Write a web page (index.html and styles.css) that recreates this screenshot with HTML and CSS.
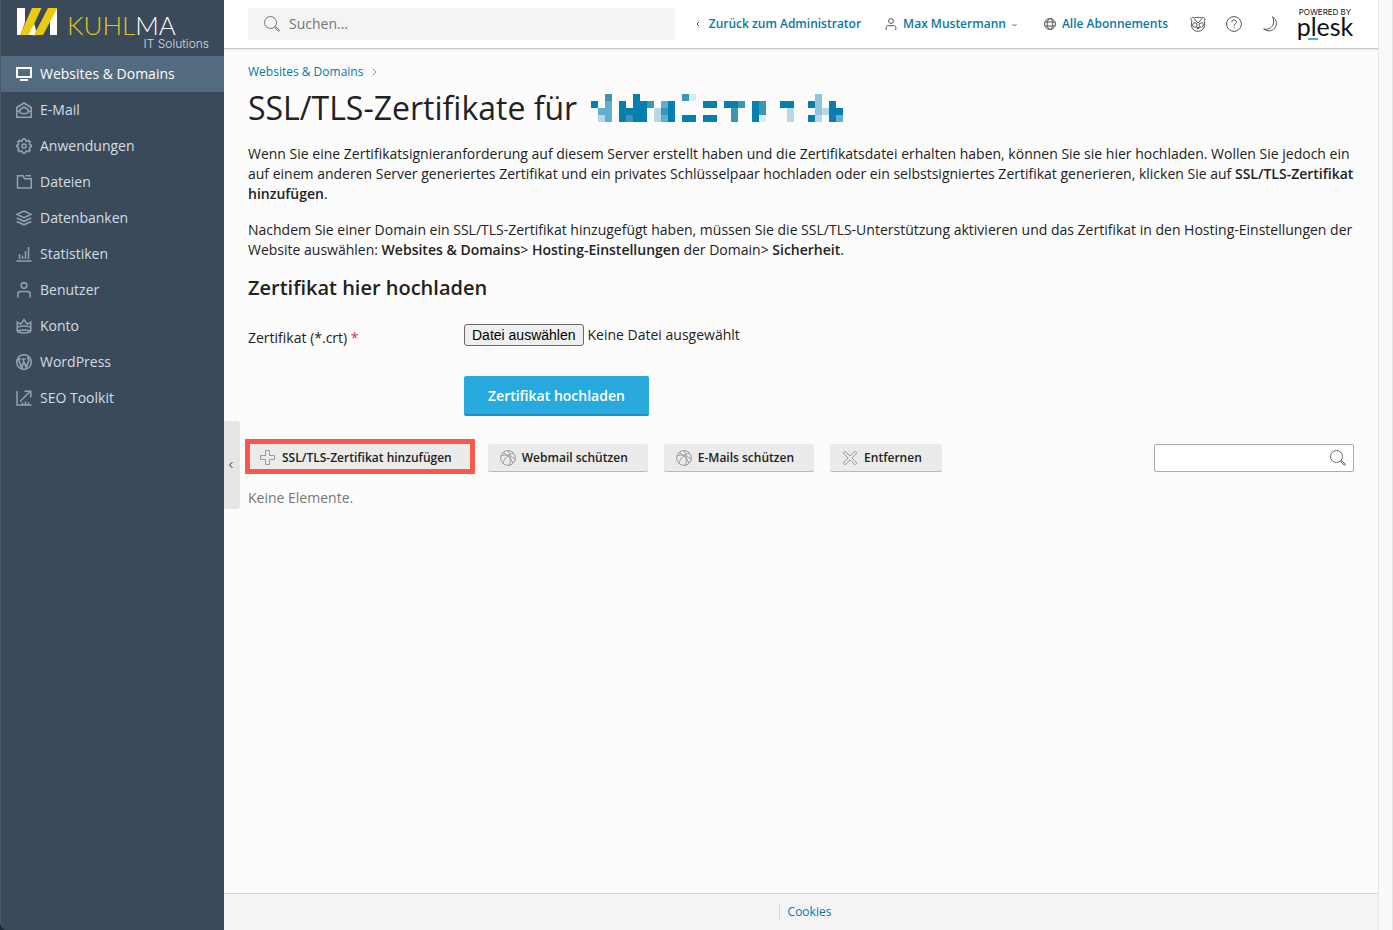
FILE: index.html
```html
<!DOCTYPE html>
<html lang="de">

<head>
	<meta charset="UTF-8" />
	<meta name="viewport" content="width=device-width, initial-scale=1.0" />
	<title>SSL/TLS-Zertifikate</title>
	<link rel="stylesheet" href="styles.css">
</head>

<body>
	<div class="page">
		<aside class="sidebar">
			<a class="brand" href="#">
				<svg class="brand-mark" width="42" height="28" viewBox="0 0 42 28">
					<path fill="#fff" d="M1 0h8v14L4.500 27H1zM13.500 19l4-5 2 6 1 7-3 .5zM41 0v27h-7V12z" />
					<path fill="#e9cb12" d="M16 0h9.500L13 27H4zM32 0h9.500L27 27h-9z" />
					<path fill="#fff" d="M12.800 27l3-7.500 3 3.500-1.800 4z" />
				</svg>
				<span class="brand-text">
					<span class="brand-name"><span class="brand-accent">KUHL</span>MA</span>
					<span class="brand-sub">IT Solutions</span>
				</span>
			</a>
			<nav class="menu">
				<a class="menu-item active" href="#">
					<svg class="icon" viewBox="0 0 16 16"><path stroke-width="2" d="M1 2h14v9H1z" /><path stroke-width="2" d="M4 14h8" /></svg>
					Websites &amp; Domains
				</a>
				<a class="menu-item" href="#">
					<svg class="icon" viewBox="0 0 16 16"><path d="M.8 5.500L8 1l7.200 4.500v9.700H.8zM1 8.500l4.500 3h5l4.500-3M4 10V7.500L8 5l4 2.500V10" /></svg>
					E-Mail
				</a>
				<a class="menu-item" href="#">
					<svg class="icon" viewBox="0 0 16 16"><circle cx="8" cy="8" r="2" /><path d="M6.700 1h2.600l.5 1.900 1 .4 1.800-1 1.600 1.600-1 1.800.4 1 1.800.5v1.700l-1.800.5-.4 1.200 1 1.700-1.600 1.600-1.800-1-1 .4L9.300 15H6.700l-.5-1.700-1-.4-1.800 1-1.600-1.600 1-1.700-.4-1.200L.8 8.900V7.200l1.600-.5.4-1-1-1.800 1.600-1.600 1.800 1 1-.4z" /></svg>
					Anwendungen
				</a>
				<a class="menu-item" href="#">
					<svg class="icon" viewBox="0 0 16 16"><path d="M1.500 1.700h5.500l1.500 3h6.800v9.300H1.500zM9.500 1.700H15" /></svg>
					Dateien
				</a>
				<a class="menu-item" href="#">
					<svg class="icon" viewBox="0 0 16 16"><path d="M8 1l7 3.300-7 3.300-7-3.300zM.8 8L8 11.300 15.200 8M.8 11.500L8 14.800l7.200-3.300" /></svg>
					Datenbanken
				</a>
				<a class="menu-item" href="#">
					<svg class="icon" viewBox="0 0 16 16"><path d="M.5 15h15M3.500 13V8M6.500 13V9.500M9.500 13V5M12.500 13V1" /></svg>
					Statistiken
				</a>
				<a class="menu-item" href="#">
					<svg class="icon" viewBox="0 0 16 16"><circle cx="8" cy="3.500" r="2.800" /><path d="M1.800 15.500V12c0-1.500 1-2.500 2.500-2.500h7.400c1.500 0 2.500 1 2.500 2.500v3.500" /></svg>
					Benutzer
				</a>
				<a class="menu-item" href="#">
					<svg class="icon" viewBox="0 0 16 16"><path d="M1.200 13V4l3.600 2.200L8 1.500l3.200 4.700L14.800 4v9c-2 2.500-11.600 2.500-13.600 0zM1.200 9.500c3-2 10.600-2 13.600 0M2 13c3-1.500 9-1.500 12 0" /></svg>
					Konto
				</a>
				<a class="menu-item" href="#">
					<svg class="icon" viewBox="0 0 16 16"><circle cx="8" cy="8" r="7.300" /><path stroke-width="1.700" d="M2.300 5.200l3.400 8.600L8 7M6.800 5l3.500 8.600 2.500-7c.2-1.500-1.300-1.700-1-3.600M1.700 5h3.500M6 5h3.500" /></svg>
					WordPress
				</a>
				<a class="menu-item" href="#">
					<svg class="icon" viewBox="0 0 16 16"><path d="M1 1v14h14.500M4 11.500L14 1.500M8.500 1.200H14.800V7.500M6.500 14.500v-2M9.500 14.500v-3M12.500 14.500v-2" /></svg>
					SEO Toolkit
				</a>
			</nav>
			<button class="collapse" type="button" aria-label="Seitenleiste einklappen">
				<svg width="6" height="8" viewBox="0 0 6 8"><path d="M4.500 1L1.500 4l3 3" /></svg>
			</button>
		</aside>

		<div class="main">
			<header class="topbar">
				<div class="search">
					<svg class="icon" viewBox="0 0 16 16"><circle cx="6.500" cy="6.500" r="6" /><path d="M11 10.500l4.500 3.500-1 1.500-4-4.500" /></svg>
					<input class="search-input" type="text" placeholder="Suchen..." aria-label="Suchen" />
				</div>
				<a class="top-link" href="#">
					<svg class="arrow" viewBox="0 0 8 8"><path d="M4 2L2 4l2 2" /></svg>
					Zurück zum Administrator
				</a>
				<a class="top-link" href="#">
					<svg class="icon-small" viewBox="0 0 12 12"><circle cx="6" cy="3" r="2.400" /><path d="M1.200 12V9.500c0-1 .8-1.800 1.800-1.800h6c1 0 1.800.8 1.800 1.800V12" /></svg>
					Max Mustermann
					<svg class="arrow" viewBox="0 0 8 8"><path d="M.5 4l2 2 2-2" /></svg>
				</a>
				<a class="top-link" href="#">
					<svg class="icon-small" viewBox="0 0 12 12"><circle cx="6" cy="6" r="5.500" /><ellipse cx="6" cy="6" rx="2.800" ry="5.500" /><path d="M1 4h10M1 8h10" /></svg>
					Alle Abonnements
				</a>
				<div class="tools">
					<button class="tool" type="button" aria-label="Panda">
						<svg class="icon" viewBox="0 0 16 16"><path d="M4.500 2c2-1 5-1 7 0M2 5C0 3.500 1 .3 4.500 1.800M14 5c2-1.500 1-4.700-2.500-3.200M2 5c-1 2.500-1 6 1 8.200C5.500 16 10.500 16 13 13.200c2-2.200 2-5.700 1-8.200M4 2.500L8 7l4-4.500" /><circle cx="4.800" cy="9" r="2.200" /><circle cx="11.200" cy="9" r="2.200" /><path d="M6.500 11.500h3L8 13.200z" /></svg>
					</button>
					<button class="tool" type="button" aria-label="Hilfe">
						<svg class="icon" viewBox="0 0 16 16"><circle cx="8" cy="8" r="7.400" /><path d="M5.800 6.200c0-3 4.600-2.800 4.600-.2C10.400 7.800 8 7.800 8 10M8 11v1.200" /></svg>
					</button>
					<button class="tool" type="button" aria-label="Dunkles Design">
						<svg class="icon" viewBox="0 0 16 16"><path d="M10.500.8c3.500 2 5 6.200 3.200 9.800-2 4.300-7.500 5.700-12 2.400 4 .8 7.300-.5 9-3.700 1.500-2.800 1.200-5.800-.2-8.500z" /></svg>
					</button>
				</div>
				<a class="plesk" href="#">
					<span class="plesk-small">POWERED BY</span>
					<span class="plesk-name">plesk</span>
				</a>
			</header>

			<main class="content">
				<nav class="breadcrumb">
					<a href="#">Websites &amp; Domains</a>
					<svg width="6" height="8" viewBox="0 0 6 8"><path d="M1.500.5L5 4 1.500 7.500" /></svg>
				</nav>
				<h1>
					SSL/TLS-Zertifikate für
					<svg class="domain" width="252" height="28" viewBox="0 0 36 4" shape-rendering="crispEdges">
						<path fill="#0580ae" d="M0 1h1v1H0zM4 1h1v3H4zM5 2h1v1H5zM6 0h1v4H6zM7 1h1v3H7zM11 1h1v3h-1zM13 3h2v1h-2zM16 1h2v1h-2zM16 3h2v1h-2zM19 1h2v1h-2zM23 1h1v3h-1zM27 1h2v1h-2zM31 1h1v1h-1zM31 3h1v1h-1zM34 1h1v3h-1zM35 2h1v1h-1z" />
						<path fill="#3c94b7" d="M2 0h1v1H2zM5 3h1v1H5zM8 1h1v1H8zM10 2h1v1h-1zM13 0h1v1h-1zM20 2h1v2h-1zM21 1h1v1h-1zM24 1h1v2h-1z" />
						<path fill="#62add0" d="M1 2h1v1H1zM2 1h1v3H2zM10 1h1v1h-1zM10 3h1v1h-1zM35 3h1v1h-1z" />
						<path fill="#94c4da" d="M32 0h1v3h-1z" />
						<path fill="#b7d8e6" d="M1 3h1v1H1zM9 2h1v2H9zM28 2h1v2h-1zM32 3h1v1h-1zM33 2h1v1h-1z" />
						<path fill="#dcebf3" d="M14 0h1v1h-1zM24 3h1v1h-1z" />
					</svg>
				</h1>
				<p>Wenn Sie eine Zertifikatsignieranforderung auf diesem Server erstellt haben und die Zertifikatsdatei erhalten haben, können Sie sie hier hochladen. Wollen Sie jedoch ein auf einem anderen Server generiertes Zertifikat und ein privates Schlüsselpaar hochladen oder ein selbstsigniertes Zertifikat generieren, klicken Sie auf <b>SSL/TLS-Zertifikat hinzufügen</b>.</p>
				<p>Nachdem Sie einer Domain ein SSL/TLS-Zertifikat hinzugefügt haben, müssen Sie die SSL/TLS-Unterstützung aktivieren und das Zertifikat in den Hosting-Einstellungen der Website auswählen: <b>Websites &amp; Domains</b>&gt; <b>Hosting-Einstellungen</b> der Domain&gt; <b>Sicherheit</b>.</p>

				<h2>Zertifikat hier hochladen</h2>
				<form class="upload-form">
					<label class="upload-label" for="certFile">Zertifikat (*.crt) <span class="required">*</span></label>
					<div class="file-field">
						<input class="file-input" type="file" id="certFile" accept=".crt" tabindex="-1" />
						<button class="file-button" type="button" id="chooseFile">Datei auswählen</button>
						<span id="fileName">Keine Datei ausgewählt</span>
					</div>
					<button class="submit-button" type="submit">Zertifikat hochladen</button>
				</form>

				<div class="toolbar">
					<button class="action highlighted" type="button">
						<svg class="icon" viewBox="0 0 16 16"><path d="M5.500.5h4v5h5v4h-5v5h-4v-5h-5v-4h5z" /></svg>
						SSL/TLS-Zertifikat hinzufügen
					</button>
					<button class="action" type="button">
						<svg class="icon" viewBox="0 0 16 16"><circle cx="8" cy="8" r="7.400" /><path d="M3 2.500c4 2 8 6 10 10.500M13.500 3C9 4 4 8 3 13.500M1 6c4-2 9-1 14 3M8 .6c2.500 4 3 9 1.500 14.800" /></svg>
						Webmail schützen
					</button>
					<button class="action" type="button">
						<svg class="icon" viewBox="0 0 16 16"><circle cx="8" cy="8" r="7.400" /><path d="M3 2.500c4 2 8 6 10 10.500M13.500 3C9 4 4 8 3 13.500M1 6c4-2 9-1 14 3M8 .6c2.500 4 3 9 1.500 14.800" /></svg>
						E-Mails schützen
					</button>
					<button class="action" type="button">
						<svg class="icon" viewBox="0 0 16 16"><path d="M3 1.200L8 6l5-4.800L14.800 3 10 8l4.800 5-1.800 1.800L8 10l-5 4.800L1.200 13 6 8 1.200 3z" /></svg>
						Entfernen
					</button>
					<div class="filter">
						<input class="filter-input" type="text" aria-label="Liste durchsuchen" />
						<button class="filter-button" type="button" aria-label="Suchen">
							<svg class="icon" viewBox="0 0 16 16"><circle cx="6.500" cy="6.500" r="6" /><path d="M11 10.500l4.500 3.500-1 1.500-4-4.500" /></svg>
						</button>
					</div>
				</div>
				<div class="empty">Keine Elemente.</div>
			</main>

			<footer class="footer">
				<a class="footer-link" href="#">Cookies</a>
			</footer>
		</div>
		<div class="gutter"></div>
	</div>

	<script>
		const certFile = document.getElementById("certFile");

		document.getElementById("chooseFile").addEventListener("click", function () {
			certFile.click();
		});

		certFile.addEventListener("change", function () {
			const file = certFile.files[0];
			document.getElementById("fileName").textContent = file ? file.name : "Keine Datei ausgewählt";
		});
	</script>
</body>

</html>
```
FILE: styles.css
```css
* {
	box-sizing: border-box;
}

body {
	margin: 0;
	background-color: #1b2733;
	color: #222;
	font-family: "Open Sans", sans-serif;
	font-size: 14px;
	line-height: 20px;
}

a {
	color: #0878a4;
	text-decoration: none;
}

button,
input {
	font-family: inherit;
}

button {
	cursor: pointer;
}

svg {
	flex: none;
	fill: none;
	stroke: currentColor;
}

.icon {
	width: 16px;
	height: 16px;
}

.icon-small {
	width: 12px;
	height: 12px;
	color: #555;
}

.page {
	display: flex;
	min-height: 100vh;
}

/* sidebar */
.sidebar {
	position: relative;
	flex: none;
	width: 224px;
	background-color: #3b4a5a;
	border-left: 1px solid #4a5a6b;
	border-bottom-left-radius: 8px;
}

.brand {
	display: flex;
	gap: 9px;
	height: 56px;
	padding: 8px 15px;
	color: #fff;
}

.brand-mark,
.domain {
	stroke: none;
}

.brand-text {
	display: flex;
	flex: 1;
	flex-direction: column;
	padding-top: 4px;
}

.brand-name {
	font-family: Lato, sans-serif;
	font-size: 26px;
	font-weight: 300;
	line-height: 26px;
}

.brand-accent {
	color: #e0c414;
}

.brand-sub {
	align-self: flex-end;
	color: #d5dbe1;
	font-family: Inter, sans-serif;
	font-size: 12px;
	font-weight: 300;
	line-height: 12px;
}

.menu-item {
	display: flex;
	align-items: center;
	gap: 8px;
	height: 36px;
	padding: 0 15px;
	color: #d3dce5;
}

.menu-item .icon {
	color: #94a2b0;
	stroke-width: 1.5;
}

.menu-item.active {
	background-color: #536b7f;
	color: #fff;
}

.menu-item.active .icon {
	color: #fff;
}

.collapse {
	position: absolute;
	top: calc(50% - 44px);
	left: 100%;
	width: 16px;
	height: 88px;
	padding: 0 2px 2px 0;
	border: none;
	border-radius: 0 3px 3px 0;
	background-color: #e6e6e6;
	color: #333;
}

/* header */
.main {
	display: flex;
	flex: 1;
	flex-direction: column;
	min-width: 0;
	background-color: #fcfcfc;
}

.gutter {
	flex: none;
	width: 15px;
	background-color: #fafafa;
	border: solid #e4e4e4;
	border-width: 0 1px;
}

.topbar {
	display: flex;
	align-items: center;
	gap: 24px;
	height: 49px;
	padding: 0 24px;
	background-color: #fff;
	border-bottom: 1px solid #c4c9c8;
	box-shadow: 0 1px 2px #0000001a;
}

.search {
	display: flex;
	flex: 1;
	align-items: center;
	gap: 9px;
	height: 32px;
	margin-right: -4px;
	padding: 0 16px;
	border-radius: 2px;
	background-color: #f4f4f4;
	color: #777;
}

.search-input {
	flex: 1;
	min-width: 0;
	padding: 0 0 2px;
	border: none;
	background: none;
	font-size: 14px;
}

.search-input::placeholder {
	color: #757575;
}

.top-link {
	display: flex;
	align-items: center;
	gap: 6px;
	font-size: 12px;
	font-weight: 600;
	white-space: nowrap;
}

.arrow {
	width: 8px;
	height: 8px;
	color: #555;
}

.tools {
	display: flex;
	gap: 20px;
	margin-left: -2px;
}

.tool {
	display: flex;
	padding: 0;
	border: none;
	background: none;
	color: #555;
}

.plesk {
	display: flex;
	flex-direction: column;
	align-items: center;
	align-self: flex-start;
	width: 58px;
	margin-left: -6px;
	padding-top: 8px;
	color: #111;
}

.plesk-small {
	font-family: Inter, sans-serif;
	font-size: 8px;
	line-height: 8px;
	white-space: nowrap;
}

.plesk-name {
	position: relative;
	font-family: Lato, sans-serif;
	font-size: 25px;
	line-height: 20px;
}

.plesk-name::after {
	content: "";
	position: absolute;
	bottom: -4px;
	left: 11px;
	width: 10px;
	height: 2px;
	background-color: #3cb8c4;
}

/* content */
.content {
	flex: 1;
	padding: 13px 24px;
}

.breadcrumb {
	display: flex;
	align-items: center;
	gap: 8px;
	color: #999;
	font-size: 12px;
}

h1 {
	display: flex;
	align-items: center;
	gap: 14px;
	margin: 6px 0 16px;
	font-size: 32px;
	font-weight: 400;
	line-height: 40px;
}

p {
	margin: 0 0 16px;
}

b {
	font-weight: 600;
}

h2 {
	margin: 0 0 24px;
	font-size: 20px;
	font-weight: 600;
	line-height: 24px;
}

.upload-form {
	display: grid;
	grid-template-columns: 216px 1fr;
	row-gap: 28px;
}

.upload-label {
	padding-top: 4px;
}

.file-field {
	display: flex;
	align-items: center;
	gap: 4px;
	height: 22px;
}

.required {
	color: #d0305a;
}

.file-input {
	position: absolute;
	width: 1px;
	height: 1px;
	opacity: 0;
}

.file-button {
	height: 22px;
	padding: 0 7px;
	border: 1px solid #6b6b6b;
	border-radius: 3px;
	background-color: #efefef;
	color: #000;
	font-family: "Liberation Sans", sans-serif;
	font-size: 14px;
}

.submit-button {
	grid-column: 2;
	justify-self: start;
	height: 40px;
	padding: 0 24px;
	border: none;
	border-bottom: 2px solid #1f8fc0;
	border-radius: 2px;
	background-color: #28aade;
	color: #fff;
	font-size: 14px;
	font-weight: 600;
}

.toolbar {
	display: flex;
	gap: 16px;
	margin: 28px 0 16px;
}

.action {
	position: relative;
	display: flex;
	align-items: center;
	gap: 6px;
	height: 28px;
	padding: 0 20px 0 12px;
	border: none;
	border-bottom: 1px solid #bbb;
	border-radius: 2px;
	background-color: #ebebeb;
	color: #222;
	font-size: 12px;
	font-weight: 600;
	white-space: nowrap;
}

.action .icon {
	color: #999;
}

.highlighted::after {
	content: "";
	position: absolute;
	inset: -5px -3px -3px;
	border: 5px solid #fa584d;
}

.filter {
	display: flex;
	align-items: center;
	width: 200px;
	height: 28px;
	margin-left: auto;
	border: 1px solid #aaa;
	border-radius: 2px;
	background-color: #fff;
}

.filter-input {
	flex: 1;
	min-width: 0;
	border: none;
	background: none;
}

.filter-button {
	display: flex;
	padding: 0 7px;
	border: none;
	background: none;
	color: #666;
}

.empty {
	color: #777;
}

.footer {
	display: flex;
	align-items: center;
	justify-content: center;
	height: 37px;
	border-top: 1px solid #d9d9d9;
	background-color: #f4f4f4;
	font-size: 12px;
}

.footer-link {
	margin-left: 8px;
	padding-left: 8px;
	border-left: 1px solid #d4d4d4;
	line-height: 16px;
}
```
